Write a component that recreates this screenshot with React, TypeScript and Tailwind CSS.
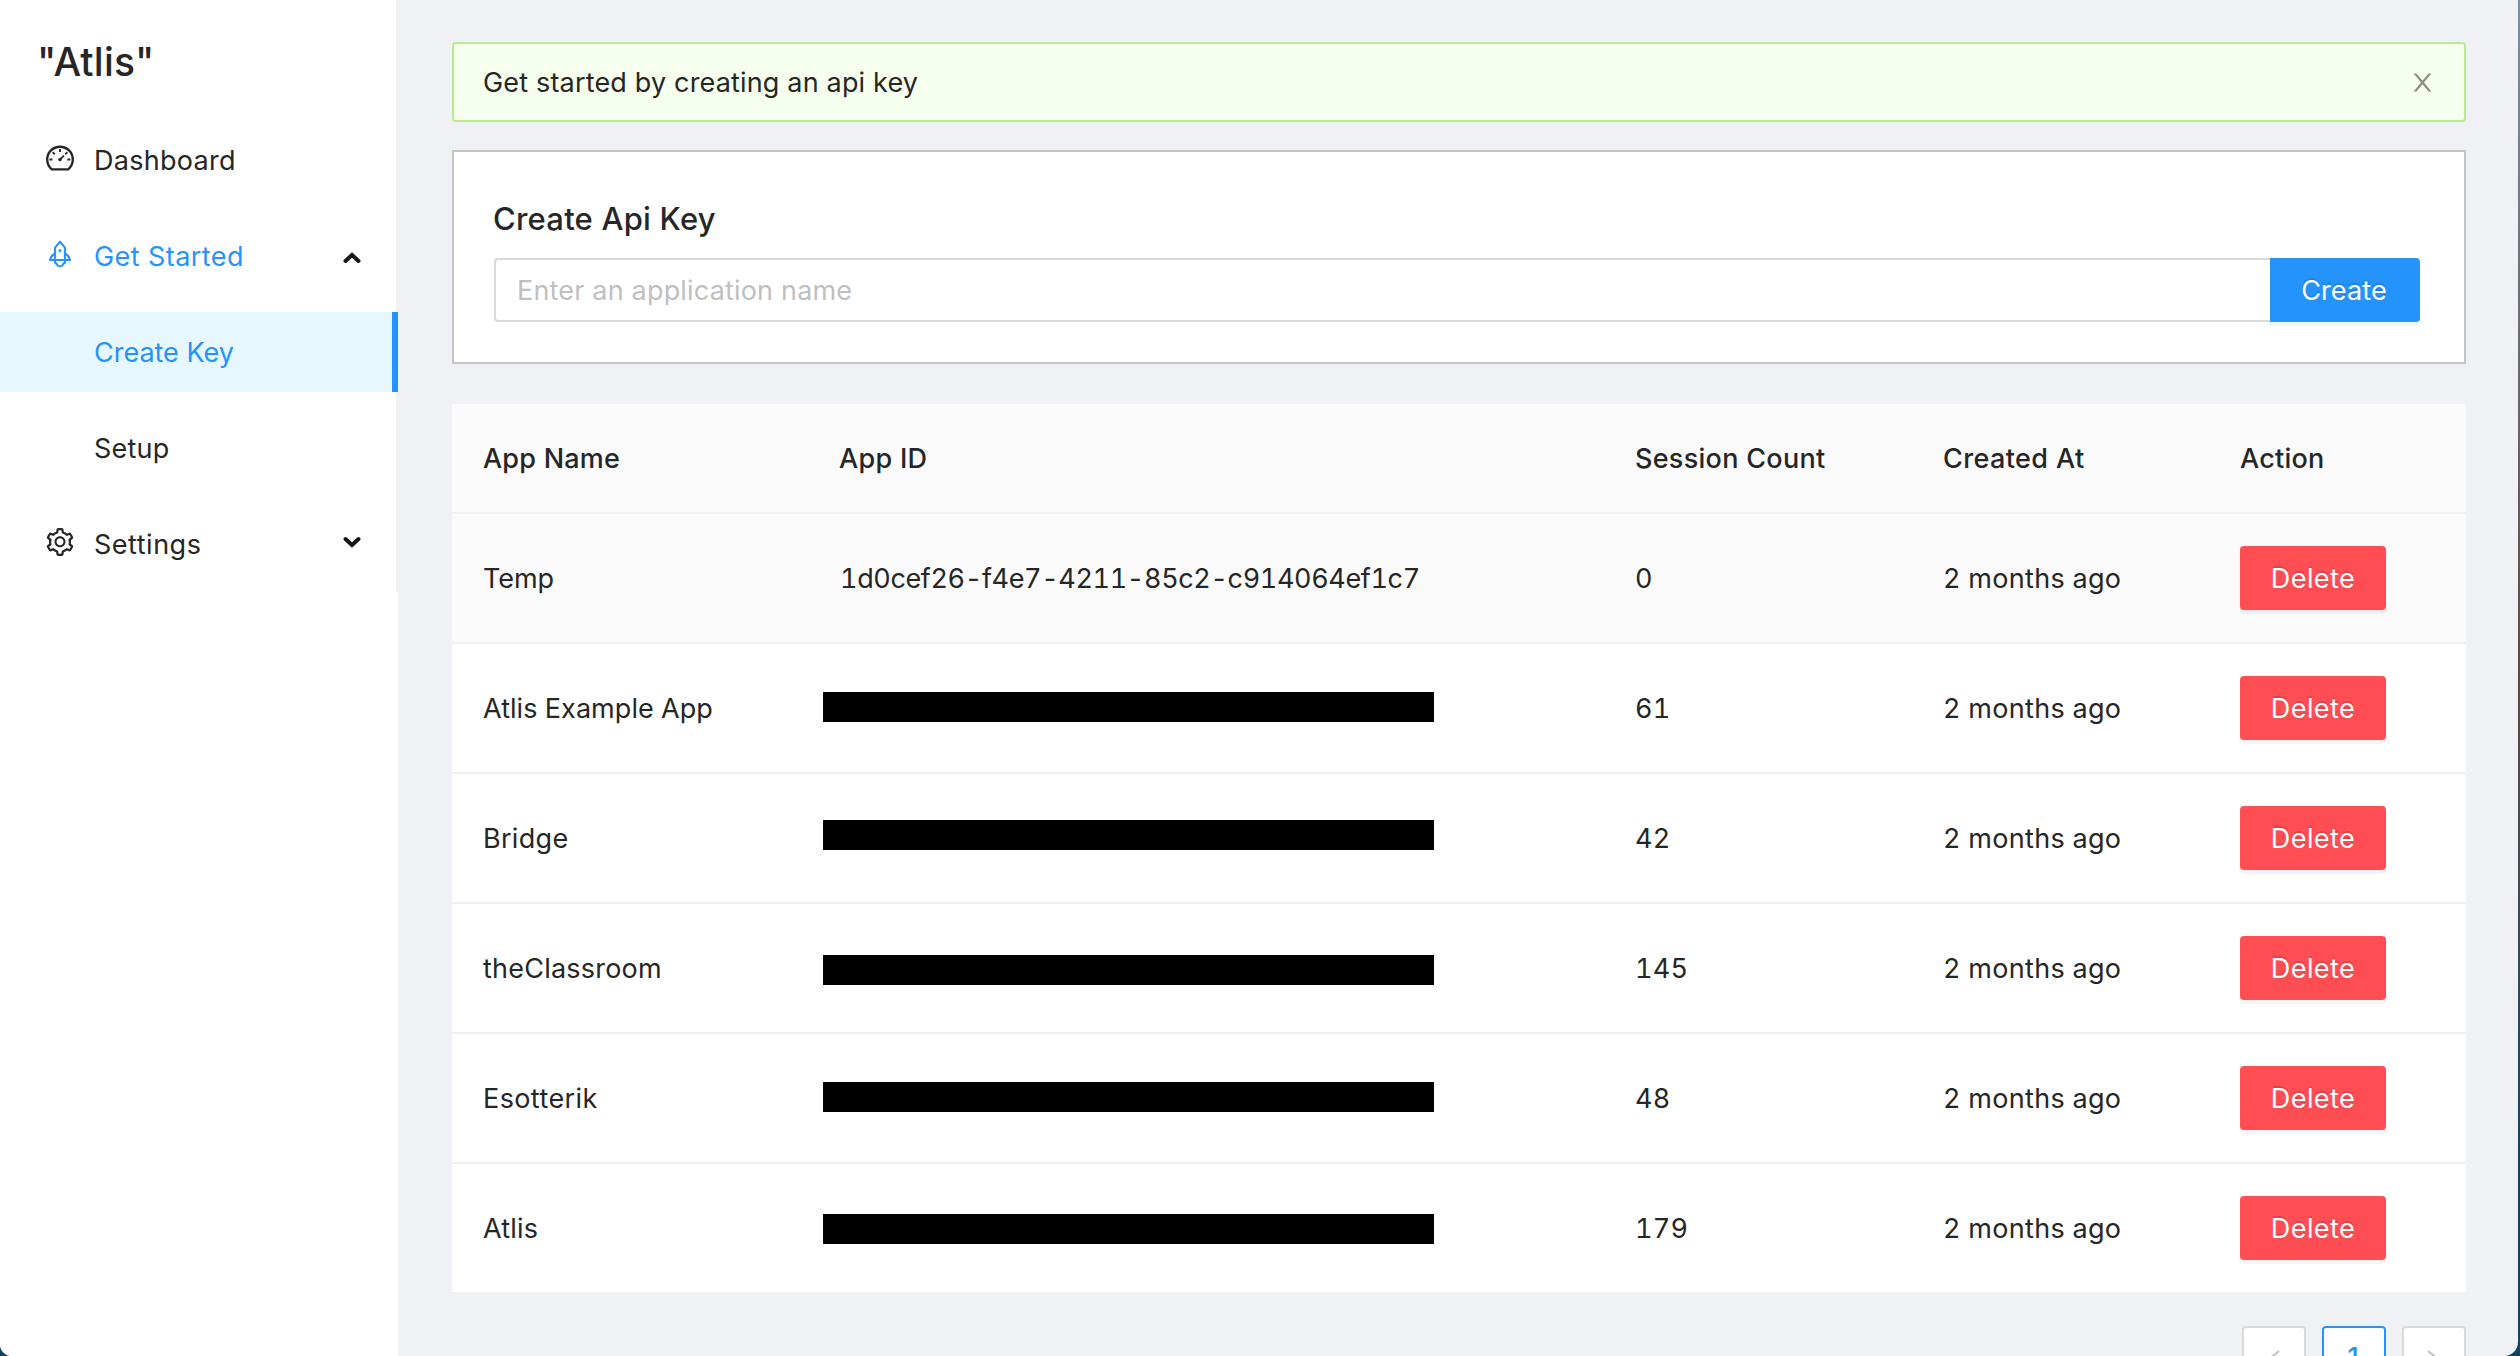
import type { ReactNode } from "react";
import { AiOutlineDashboard, AiOutlineRocket, AiOutlineSetting } from "react-icons/ai";

function Chevron({ up = false }: { up?: boolean }) {
  return (
    <svg
      viewBox="0 0 18 12"
      className={up ? "mt-[3px] h-3 w-[18px]" : "mb-1 h-3 w-[18px]"}
      fill="none"
      stroke="#151515"
      strokeWidth="4"
      strokeLinecap="round"
    >
      <path d={up ? "M2.5 9L9 3l6.5 6" : "M2.5 3L9 9l6.5-6"} />
    </svg>
  );
}

function MenuItem({
  label,
  tracking,
  icon,
  arrow,
  color = "text-[#262626]",
}: {
  label: string;
  tracking: string;
  icon?: ReactNode;
  arrow?: ReactNode;
  color?: string;
}) {
  return (
    <div className={`flex h-20 items-center pr-[35px] pl-11 ${color}`}>
      <span className="mr-[18px] mb-1 w-8 shrink-0 text-[32px]">{icon}</span>
      <span className={`grow pt-0.5 ${tracking}`}>{label}</span>
      {arrow}
    </div>
  );
}

const apps = [
  { name: "Temp", tracking: "tracking-[-0.07px]", count: "0" },
  { name: "Atlis Example App", tracking: "tracking-[0.05px]", count: "61", bar: "top-[-1px]" },
  { name: "Bridge", tracking: "tracking-[0.3px]", count: "42", bar: "top-[-3px]" },
  { name: "theClassroom", tracking: "tracking-[0.22px]", count: "145", bar: "top-[2px]" },
  { name: "Esotterik", tracking: "tracking-[0.4px]", count: "48", bar: "top-[-1px]" },
  { name: "Atlis", tracking: "tracking-[0.2px]", count: "179", bar: "top-[1px]" },
];

const columns = "grid grid-cols-[356px_796px_308px_297px_1fr] items-center pl-[31px]";

export default function App() {
  return (
    <div className="relative h-[1356px] w-[2520px] overflow-hidden bg-linear-to-b from-[#7d8ea1] via-[#5c4a42] via-50% to-[#0f4560] to-85% pr-0.5 font-['Inter',sans-serif] text-[27px] leading-[44px] text-[#262626]">
      <div className="flex h-full overflow-hidden rounded-br-[14px] rounded-bl-[12px] bg-[#f0f1f5]">
        <aside className="w-[398px] shrink-0 bg-white">
          <div className="h-[592px] border-r-2 border-[#f0f0f3]">
            <h1 className="pt-10 pl-[37px] text-[39px] font-medium tracking-[0.19px]">"Atlis"</h1>
            <nav className="flex flex-col gap-4 pt-9">
              <MenuItem label="Dashboard" tracking="tracking-[0.28px]" icon={<AiOutlineDashboard />} />
              <MenuItem
                label="Get Started"
                tracking="tracking-[0.43px]"
                icon={<AiOutlineRocket />}
                arrow={<Chevron up />}
                color="text-[#2593fc]"
              />
              <div className="-mr-0.5 border-r-[6px] border-[#2593fc] bg-[#e6f7ff]">
                <MenuItem label="Create Key" tracking="tracking-[-0.01px]" color="text-[#2593fc]" />
              </div>
              <MenuItem label="Setup" tracking="tracking-[0.21px]" />
              <MenuItem
                label="Settings"
                tracking="tracking-[0.51px]"
                icon={<AiOutlineSetting />}
                arrow={<Chevron />}
              />
            </nav>
          </div>
        </aside>

        <main className="flex w-[2068px] shrink-0 flex-col pt-[42px] pl-[54px]">
          <div className="flex h-20 shrink-0 items-center justify-between rounded-[4px] border-2 border-[#b7eb8f] bg-[#f6ffed] pr-[29px] pl-[29px]">
            <span className="pt-0.5 tracking-[0.17px]">Get started by creating an api key</span>
            <svg viewBox="64 64 896 896" className="size-[25px] fill-[#8a8f86]">
              <path d="M563.8 512l262.5-312.9c4.4-5.2.7-13.1-6.1-13.1h-79.8c-4.7 0-9.2 2.1-12.3 5.7L511.6 449.8 295.1 191.7c-3-3.6-7.5-5.7-12.3-5.7H203c-6.8 0-10.5 7.9-6.1 13.1L459.4 512 196.9 824.9A7.95 7.95 0 0 0 203 838h79.8c4.7 0 9.2-2.1 12.3-5.7l216.500-258.100 216.500 258.100c3 3.600 7.500 5.700 12.300 5.700h79.800c6.800 0 10.500-7.900 6.100-13.100L563.800 512z" />
            </svg>
          </div>

          <section className="mt-7 h-[214px] shrink-0 border-2 border-[#c4c4c6] bg-white px-10 pt-[45px]">
            <h2 className="-ml-px text-[31px] font-medium tracking-[0.22px]">Create Api Key</h2>
            <div className="mt-[17px] mr-1 flex h-16">
              <div className="flex grow items-center rounded-l-[4px] border-2 border-r-0 border-[#d9d9d9] pt-0.5 pl-[21px] tracking-[0.18px] text-[#bfbfbf]">
                Enter an application name
              </div>
              <button className="w-[150px] rounded-r-[4px] bg-[#2593fc] pt-0.5 pr-0.5 tracking-[0.13px] text-white shadow-[0_4px_0_rgba(0,0,0,0.045)] [text-shadow:0_-2px_0_rgba(0,0,0,0.12)]">
                Create
              </button>
            </div>
          </section>

          <section className="mt-10 flex shrink-0 flex-col overflow-hidden rounded-t-[4px] bg-white [font-feature-settings:'tnum']">
            <div className={`${columns} h-[110px] border-b-2 border-[#f0f0f0] bg-[#fafafa] pt-0.5 font-medium`}>
              <span className="tracking-[0.22px]">App Name</span>
              <span className="tracking-[0.28px]">App ID</span>
              <span className="tracking-[0.28px]">Session Count</span>
              <span className="tracking-[0.4px]">Created At</span>
              <span className="tracking-[0.24px]">Action</span>
            </div>
            {apps.map((app) => (
              <div
                key={app.name}
                className={`${columns} h-[130px] border-b-2 border-[#f0f0f0] ${app.bar ? "bg-white" : "bg-[#fafafa]"}`}
              >
                <span className={`pt-0.5 ${app.tracking}`}>{app.name}</span>
                {app.bar ? (
                  <span className={`relative -ml-4 h-[30px] w-[611px] bg-black ${app.bar}`} />
                ) : (
                  <span className="pt-0.5 pl-px tracking-[-0.37px]">1d0cef26-f4e7-4211-85c2-c914064ef1c7</span>
                )}
                <span className="pt-0.5 tracking-[0.3px]">{app.count}</span>
                <span className="pt-0.5 tracking-[0.3px]">2 months ago</span>
                <button className="h-16 w-[146px] rounded-[4px] bg-[#ff4d54] pt-0.5 tracking-[0.42px] text-white shadow-[0_4px_0_rgba(0,0,0,0.045)] [text-shadow:0_-2px_0_rgba(0,0,0,0.12)]">
                  Delete
                </button>
              </div>
            ))}
          </section>

          <div className="mt-8 flex shrink-0 justify-end gap-4">
            <div className="flex size-16 items-center justify-center rounded-[4px] border-2 border-[#d9d9d9] bg-white pt-0.5">
              <svg viewBox="0 0 12 18" className="h-[18px] w-3" fill="none" stroke="#bfbfbf" strokeWidth="2">
                <path d="M11 1L1 9l10 8" />
              </svg>
            </div>
            <div className="flex size-16 items-center justify-center rounded-[4px] border-2 border-[#2593fc] bg-white pr-0.5 font-medium text-[#2593fc]">
              1
            </div>
            <div className="flex size-16 items-center justify-center rounded-[4px] border-2 border-[#d9d9d9] bg-white pt-0.5 pr-0.5">
              <svg viewBox="0 0 12 18" className="h-[18px] w-3" fill="none" stroke="#bfbfbf" strokeWidth="2">
                <path d="M1 1l10 8L1 17" />
              </svg>
            </div>
          </div>
        </main>
      </div>
    </div>
  );
}
